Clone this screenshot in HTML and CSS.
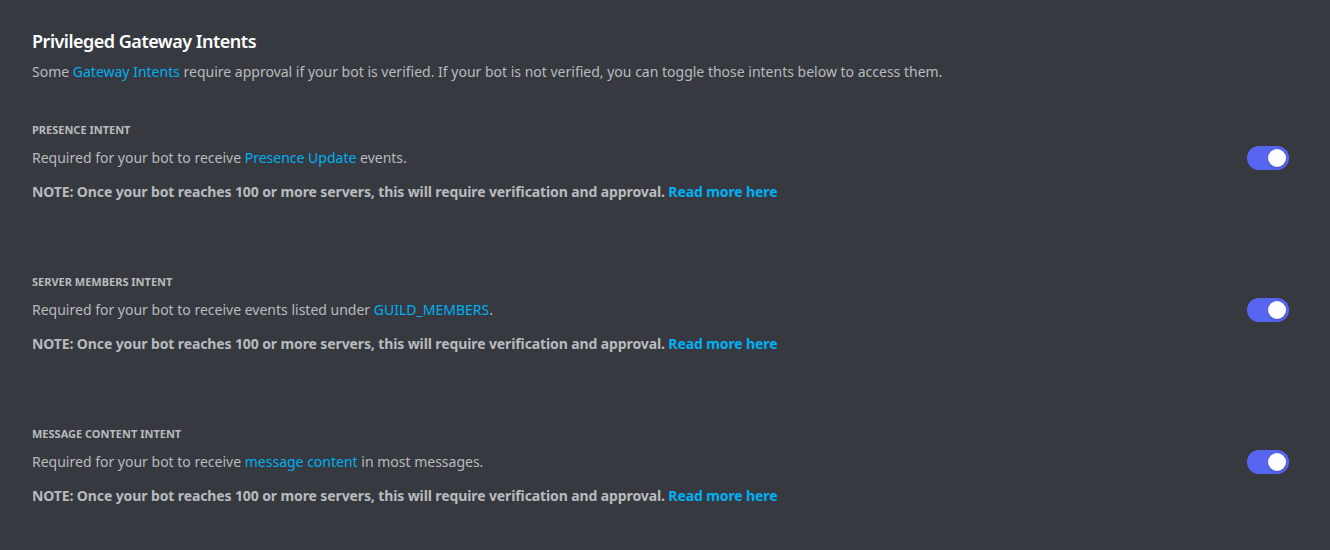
FILE: index.html
```html
<!DOCTYPE html>
<html>
<head>
<meta charset="utf-8">
<link rel="stylesheet" href="styles.css">
</head>
<body>
<main class="page">
  <h2 class="title">Privileged Gateway Intents</h2>
  <p class="desc">Some <a class="link">Gateway Intents</a> require approval if your bot is verified. If your bot is not verified, you can toggle those intents below to access them.</p>

  <section class="intent">
    <h5 class="label">Presence Intent</h5>
    <div class="row">
      <p class="text">Required for your bot to receive <a class="link">Presence Update</a> events.</p>
      <div class="toggle"><span class="knob"></span></div>
    </div>
    <p class="note">NOTE: Once your bot reaches 100 or more servers, this will require verification and approval. <a class="link">Read more here</a></p>
  </section>

  <section class="intent">
    <h5 class="label">Server Members Intent</h5>
    <div class="row">
      <p class="text">Required for your bot to receive events listed under <a class="link">GUILD_MEMBERS</a>.</p>
      <div class="toggle"><span class="knob"></span></div>
    </div>
    <p class="note">NOTE: Once your bot reaches 100 or more servers, this will require verification and approval. <a class="link">Read more here</a></p>
  </section>

  <section class="intent">
    <h5 class="label">Message Content Intent</h5>
    <div class="row">
      <p class="text">Required for your bot to receive <a class="link">message content</a> in most messages.</p>
      <div class="toggle"><span class="knob"></span></div>
    </div>
    <p class="note">NOTE: Once your bot reaches 100 or more servers, this will require verification and approval. <a class="link">Read more here</a></p>
  </section>
</main>
</body>
</html>
```

FILE: styles.css
```css
html, body {
  margin: 0;
  padding: 0;
  background: #36393f;
  height: 100%;
}
body {
  font-family: "Noto Sans", "Open Sans", sans-serif;
  color: #b9bbbe;
}
.page {
  padding: 29px 41px 0 32px;
}
.title {
  margin: 0;
  font-size: 18px;
  line-height: 24px;
  font-weight: 600;
  letter-spacing: -0.5px;
  color: #ffffff;
}
.desc {
  margin: 9px 0 0;
  font-size: 14px;
  line-height: 20px;
}
.link {
  color: #00b0f4;
  text-decoration: none;
}
.intent {
  margin-top: 40px;
  height: 112px;
}
.label {
  margin: 0;
  font-size: 11px;
  line-height: 16px;
  font-weight: 700;
  text-transform: uppercase;
  color: #b9bbbe;
}
.row {
  display: flex;
  align-items: center;
  justify-content: space-between;
  margin-top: 8px;
}
.text {
  margin: 0;
  font-size: 14px;
  line-height: 20px;
}
.note {
  margin: 12px 0 0;
  font-size: 14px;
  line-height: 20px;
  font-weight: 700;
  letter-spacing: -0.11px;
}
.toggle {
  width: 42px;
  height: 24px;
  border-radius: 12px;
  background: #5865f2;
  display: flex;
  align-items: center;
  justify-content: flex-end;
  padding: 0 3px;
  box-sizing: border-box;
}
.knob {
  width: 18px;
  height: 18px;
  border-radius: 50%;
  background: #fff;
  box-shadow: 0 1px 2px rgba(0,0,0,0.2);
}
```
